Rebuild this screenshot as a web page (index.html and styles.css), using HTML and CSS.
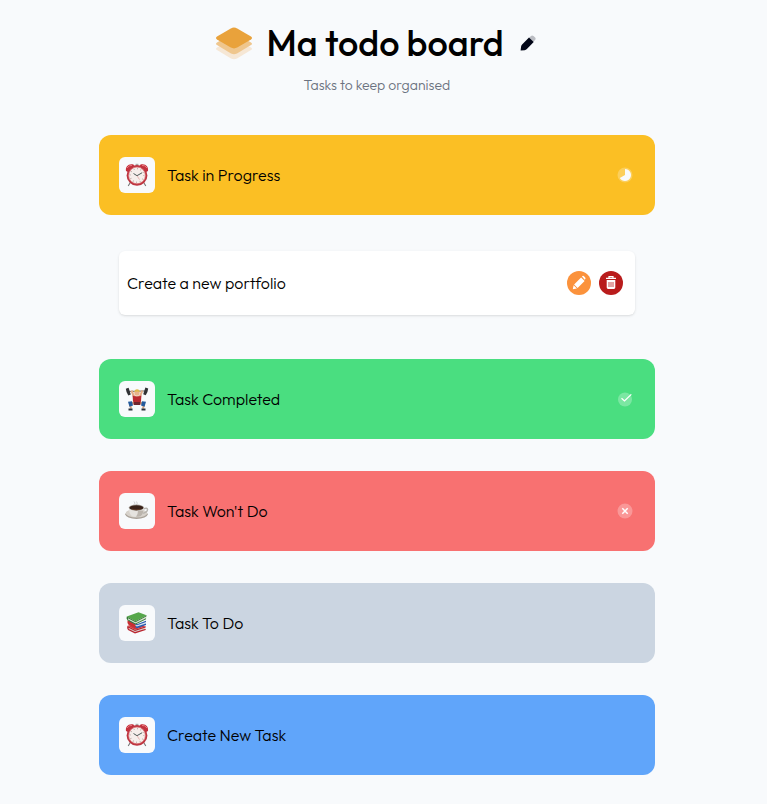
FILE: index.html
```html
<!DOCTYPE html>
<html lang="en">
<head>
<meta charset="utf-8">
<title>Ma todo board</title>
<link rel="stylesheet" href="styles.css">
</head>
<body>
<svg width="0" height="0" class="defs">
  <symbol id="clock" viewBox="0 0 24 24">
    <path d="M5 20 3.200 23M19 20l1.800 3" stroke="#777" stroke-width="1.100"/>
    <path d="M1 8C0 3.500 4 0 8.500 1.600l1 2L3 9zM23 8C24 3.500 20 0 15.500 1.600l-1 2L21 9z" fill="#c5303c"/>
    <path d="M2 5q2-3 5-2.600M22 5q-2-3-5-2.600" stroke="#e77b80" fill="none"/>
    <path d="M10.600.8h2.800v2.700h-2.800z" fill="#aaa"/>
    <circle cx="12" cy="12.400" r="10.400" fill="#bd3541"/>
    <circle cx="12" cy="12.400" r="8.400" fill="#f6eeeb" stroke="#d8696d" stroke-width=".7"/>
    <circle cx="12" cy="12.400" r="6.800" fill="none" stroke="#aa9290" stroke-width="1.500" stroke-dasharray=".6 2.960"/>
    <path d="m8.500 10.500 3.500 2.200 5-2.900" fill="none" stroke="#374747" stroke-width=".9"/>
    <path d="m12 12.600 2.500 4" stroke="#d67a7a" stroke-width=".5"/>
  </symbol>
</svg>
<main class="board">
  <header class="header">
    <div class="heading">
      <svg class="logo" viewBox="0 0 38 34">
        <path d="M16.500 13q2.500-1.200 5 0L36 20.500q2 1.300 0 2.600L22 31.500q-3 1.500-6 0L2 23.100q-2-1.300 0-2.600z" fill="#f6e7d5"/>
        <path d="M16.500 7q2.500-1.200 5 0L36 15.500q2 1.300 0 2.600L22 26.500q-3 1.500-6 0L2 18.100q-2-1.300 0-2.600z" fill="#efc68d"/>
        <path d="M15.800 1.400q3.200-1.600 6.400 0L36 9.400q2 1.600 0 3.200l-13.800 8q-3.200 1.600-6.400 0L2 12.600Q0 11 2 9.400z" fill="#e9a23b"/>
      </svg>
      <h1>Ma todo board</h1>
      <svg class="edit" viewBox="0 0 16 16">
        <path d="M9.200 2.800 11 1q1.200-1 2.500.1l1.600 1.500q1 1.200 0 2.400l-1.900 1.900z" fill="#bbbdc3"/>
        <path d="m9 2.500 4.700 4.600-6.800 7q-1 .9-2.200 1.100L.6 15.600l.5-4.200q.1-1.100 1-2z" fill="#020617"/>
      </svg>
    </div>
    <p class="tagline">Tasks to keep organised</p>
  </header>

  <section class="task progress">
    <span class="tile"><svg class="emoji"><use href="#clock"/></svg></span>
    <h2>Task in Progress</h2>
    <svg class="state" viewBox="0 0 16 16"><circle cx="8" cy="8" r="7.500" fill="#fff" fill-opacity=".25"/><path d="M8 2a6 6 0 1 1-5.200 9L8 8z" fill="#f8fafc"/></svg>
  </section>

  <article class="item">
    <p>Create a new portfolio</p>
    <button class="action modify" aria-label="Edit">
      <svg viewBox="0 0 24 24"><path d="m14.100 6.400 3.500 3.500-7 7.100-3.500-3.500zM15 5.500l.4-.4q.8-.6 1.600.1l1.200 1.200q.7.800.1 1.600l-.6.700zM6.600 14.200l3.300 3.300-4.100.8z" fill="#fff"/></svg>
    </button>
    <button class="action remove" aria-label="Delete">
      <svg viewBox="0 0 24 24"><path d="M7 7.300h10M10 7V5.600h4V7" fill="none" stroke="#fff" stroke-width="1.200"/><path d="M7.700 9h8.600v7.600q0 1.400-1.400 1.400H9.100q-1.400 0-1.400-1.400z" fill="#fff"/><path d="M10 11v5M12 11v5M14 11v5" stroke="#b91c1c" stroke-width=".8"/></svg>
    </button>
  </article>

  <section class="task completed">
    <span class="tile">
      <svg class="emoji" viewBox="0 0 24 24">
        <path d="m2 4.500 20-.6" stroke="#555" stroke-width=".9"/>
        <path d="M.8 1.800 3.600.7l2.200 6.800-2.500 1Q1.200 5.500.8 1.800zM23.200 1.500 20.400.5l-2.200 6.800 2.500 1q2.200-3 2.500-6.800z" fill="#303235"/>
        <path d="m6.500 3.500 2.200 5.500 3 1.600 3.500-1.600 2.100-5.500" fill="none" stroke="#e3ac86" stroke-width="2.100"/>
        <circle cx="12" cy="6" r="2.700" fill="#e8b38b"/><path d="M9.300 5.300q.2-3 2.800-3t2.700 3q-2.700-1.500-5.500 0z" fill="#dfb94c"/>
        <path d="M7.600 8.500q4.400 2 8.800 0l-.6 9H8.200z" fill="#ba2930"/>
        <path d="M9 15.500 5 17l1 4.500M15.200 15.500 19 17l-1 4.500" fill="none" stroke="#dca37e" stroke-width="2"/>
        <path d="m3 14.800 4-.5 1 4.200-3.500 1.200zM21 14.800l-4-.5-1 4.200 3.500 1.200z" fill="#245b9d"/>
        <path d="M8.500 15h7l-.5 3H9z" fill="#70252d"/>
        <path d="M3.500 22.500h4M16.500 22.500h4" stroke="#2a303b" stroke-width="2"/>
      </svg>
    </span>
    <h2>Task Completed</h2>
    <svg class="state" viewBox="0 0 16 16"><circle cx="8" cy="8.500" r="7" fill="#fff" fill-opacity=".27"/><path d="m4.500 7.200 3 2.700 6.800-6.500" fill="none" stroke="#fff" stroke-width="1.300"/></svg>
  </section>

  <section class="task wont">
    <span class="tile">
      <svg class="emoji" viewBox="0 0 24 24">
        <path d="M9 5.500q2-1.300 0-3M11.500 6q1.500-1.800 0-3.500" stroke="#d2d3d5" fill="none"/>
        <ellipse cx="11.500" cy="15.200" rx="11.200" ry="4.700" fill="#a8a198"/><ellipse cx="11.500" cy="14.300" rx="10.800" ry="4.200" fill="#d7d2cb"/>
        <path d="M18.200 10q4.500-1.700 4.300.8-.2 2.800-5.300 3.500" fill="none" stroke="#b8b5b0" stroke-width="1.500"/>
        <path d="M3.900 8.800q.1 8.400 5.100 9h4.500q5.100-.7 5.400-9z" fill="#e5e3df"/><path d="M13 11.500h5.600q-.8 5.800-5.100 6.300H11q2-2 2-6.300z" fill="#bbb5ad"/>
        <ellipse cx="11.400" cy="8.600" rx="7.600" ry="3.100" fill="#a8a39b"/><ellipse cx="11.400" cy="8.800" rx="6.900" ry="2.500" fill="#392219"/><path d="M7 10.200q4 1.300 8.500 0" stroke="#774b30" fill="none" stroke-width=".6"/>
      </svg>
    </span>
    <h2>Task Won't Do</h2>
    <svg class="state" viewBox="0 0 16 16"><circle cx="8" cy="8" r="7.500" fill="#fff" fill-opacity=".27"/><path d="m5.300 5.300 5.400 5.400m0-5.400-5.400 5.400" stroke="#fff" stroke-width="1.500"/></svg>
  </section>

  <section class="task todo">
    <span class="tile">
      <svg class="emoji" viewBox="0 0 24 24">
        <path d="m2.500 15 7.500 4 10-3v2.500l-10 3.200L3 18z" fill="#d8d2cf"/>
        <path d="m2.500 14.800 8-2 10.200 2.500L10 18.800z" fill="#d3373b"/>
        <path d="m2.500 14.800 7.500 4 10.700-3.500v1.200L10 20l-6.500-3.300.3 1.300 6.200 3 10.700-3.200v1.300L10 22.500l-7-3.600q-1.500-2-.5-4.100z" fill="#ba2630"/>
        <path d="m5 10 7 3.500 8.500-3.500v3.800L12 16.700 5 14z" fill="#d9e0e9"/>
        <path d="m4 9.200 8 4L21 9.800V11l-9 3.200-6.500-2.700v1.600L12 15.600l9-3.100v1.400l-9 3.300-7.500-3.700q-1.500-2-.5-4.300z" fill="#285aaf"/>
        <path d="m2.500 9.300 8 4.300v3.400l-7-3.200q-1.500-2-1-4.500z" fill="#c82f32"/>
        <path d="m2.500 5.500 8 5L21.300 4.700v3L10.500 13 2.800 8.500z" fill="#dce0d5"/>
        <path d="m1.800 5.500 11.700-4.300 8 3-11 6z" fill="#55a74b"/>
        <path d="m1.800 5.500 8.700 4.700 11-6v1l-11 6.100L3 7.200v1.300l7.500 4L21 7.200v1l-10.500 5.400-8-4.300q-1.500-1.700-.7-3.800z" fill="#347b34"/>
      </svg>
    </span>
    <h2>Task To Do</h2>
  </section>

  <section class="task create">
    <span class="tile"><svg class="emoji"><use href="#clock"/></svg></span>
    <h2>Create New Task</h2>
  </section>
</main>
</body>
</html>
```
FILE: styles.css
```css
* { box-sizing: border-box; }
body { margin: 0; background: #f8fafc; color: #000; font-family: Outfit, Lato, "Liberation Sans", sans-serif; overflow: hidden; }
h1, h2, p { margin: 0; font-weight: 350; white-space: nowrap; }
svg { display: block; flex: none; }
.defs { display: none; }
.board { width: 556px; margin-left: 99px; }
.header { height: 135px; padding-top: 19px; }
.heading { display: flex; align-items: center; height: 48px; padding-left: 116px; }
.logo { width: 38px; height: 34px; margin: 2px 13.5px 0 0; }
h1 { width: 236.500px; font-size: 36px; line-height: 48px; font-weight: 500; }
.edit { width: 16px; height: 16px; margin: -1px 0 0 17px; }
.tagline { padding-left: 204.600px; margin-top: 8px; font-size: 14px; line-height: 20px; color: #6b7280; }
.task { display: flex; align-items: center; height: 80px; padding: 0 22px 0 20px; border-radius: 12px; margin-bottom: 32px; }
.tile { display: grid; place-items: center; width: 36px; height: 36px; margin-right: 12px; border-radius: 6px; background: #f8fafc; flex: none; }
.emoji { width: 24px; height: 24px; }
h2, .item p { font-size: 16px; line-height: 24px; }
.state { width: 16px; height: 16px; margin: -1px 0 0 auto; }
.progress { background: #fbbf24; margin-bottom: 36px; }
.completed { background: #4ade80; }
.wont { background: #f87171; }
.todo { background: #cbd5e1; }
.create { background: #60a5fa; margin-bottom: 0; }
.item { display: flex; align-items: center; gap: 8px; height: 64px; margin: 0 20px 44px; padding: 0 12px 0 8px; border-radius: 6px; background: #fff; box-shadow: 0 1px 3px rgb(0 0 0 / .1), 0 1px 2px -1px rgb(0 0 0 / .1); }
.item p { margin-right: auto; }
.action { width: 24px; height: 24px; padding: 0; border: 0; border-radius: 50%; }
.action svg { width: 24px; height: 24px; }
.modify { background: #fb923c; }
.remove { background: #b91c1c; }
```
